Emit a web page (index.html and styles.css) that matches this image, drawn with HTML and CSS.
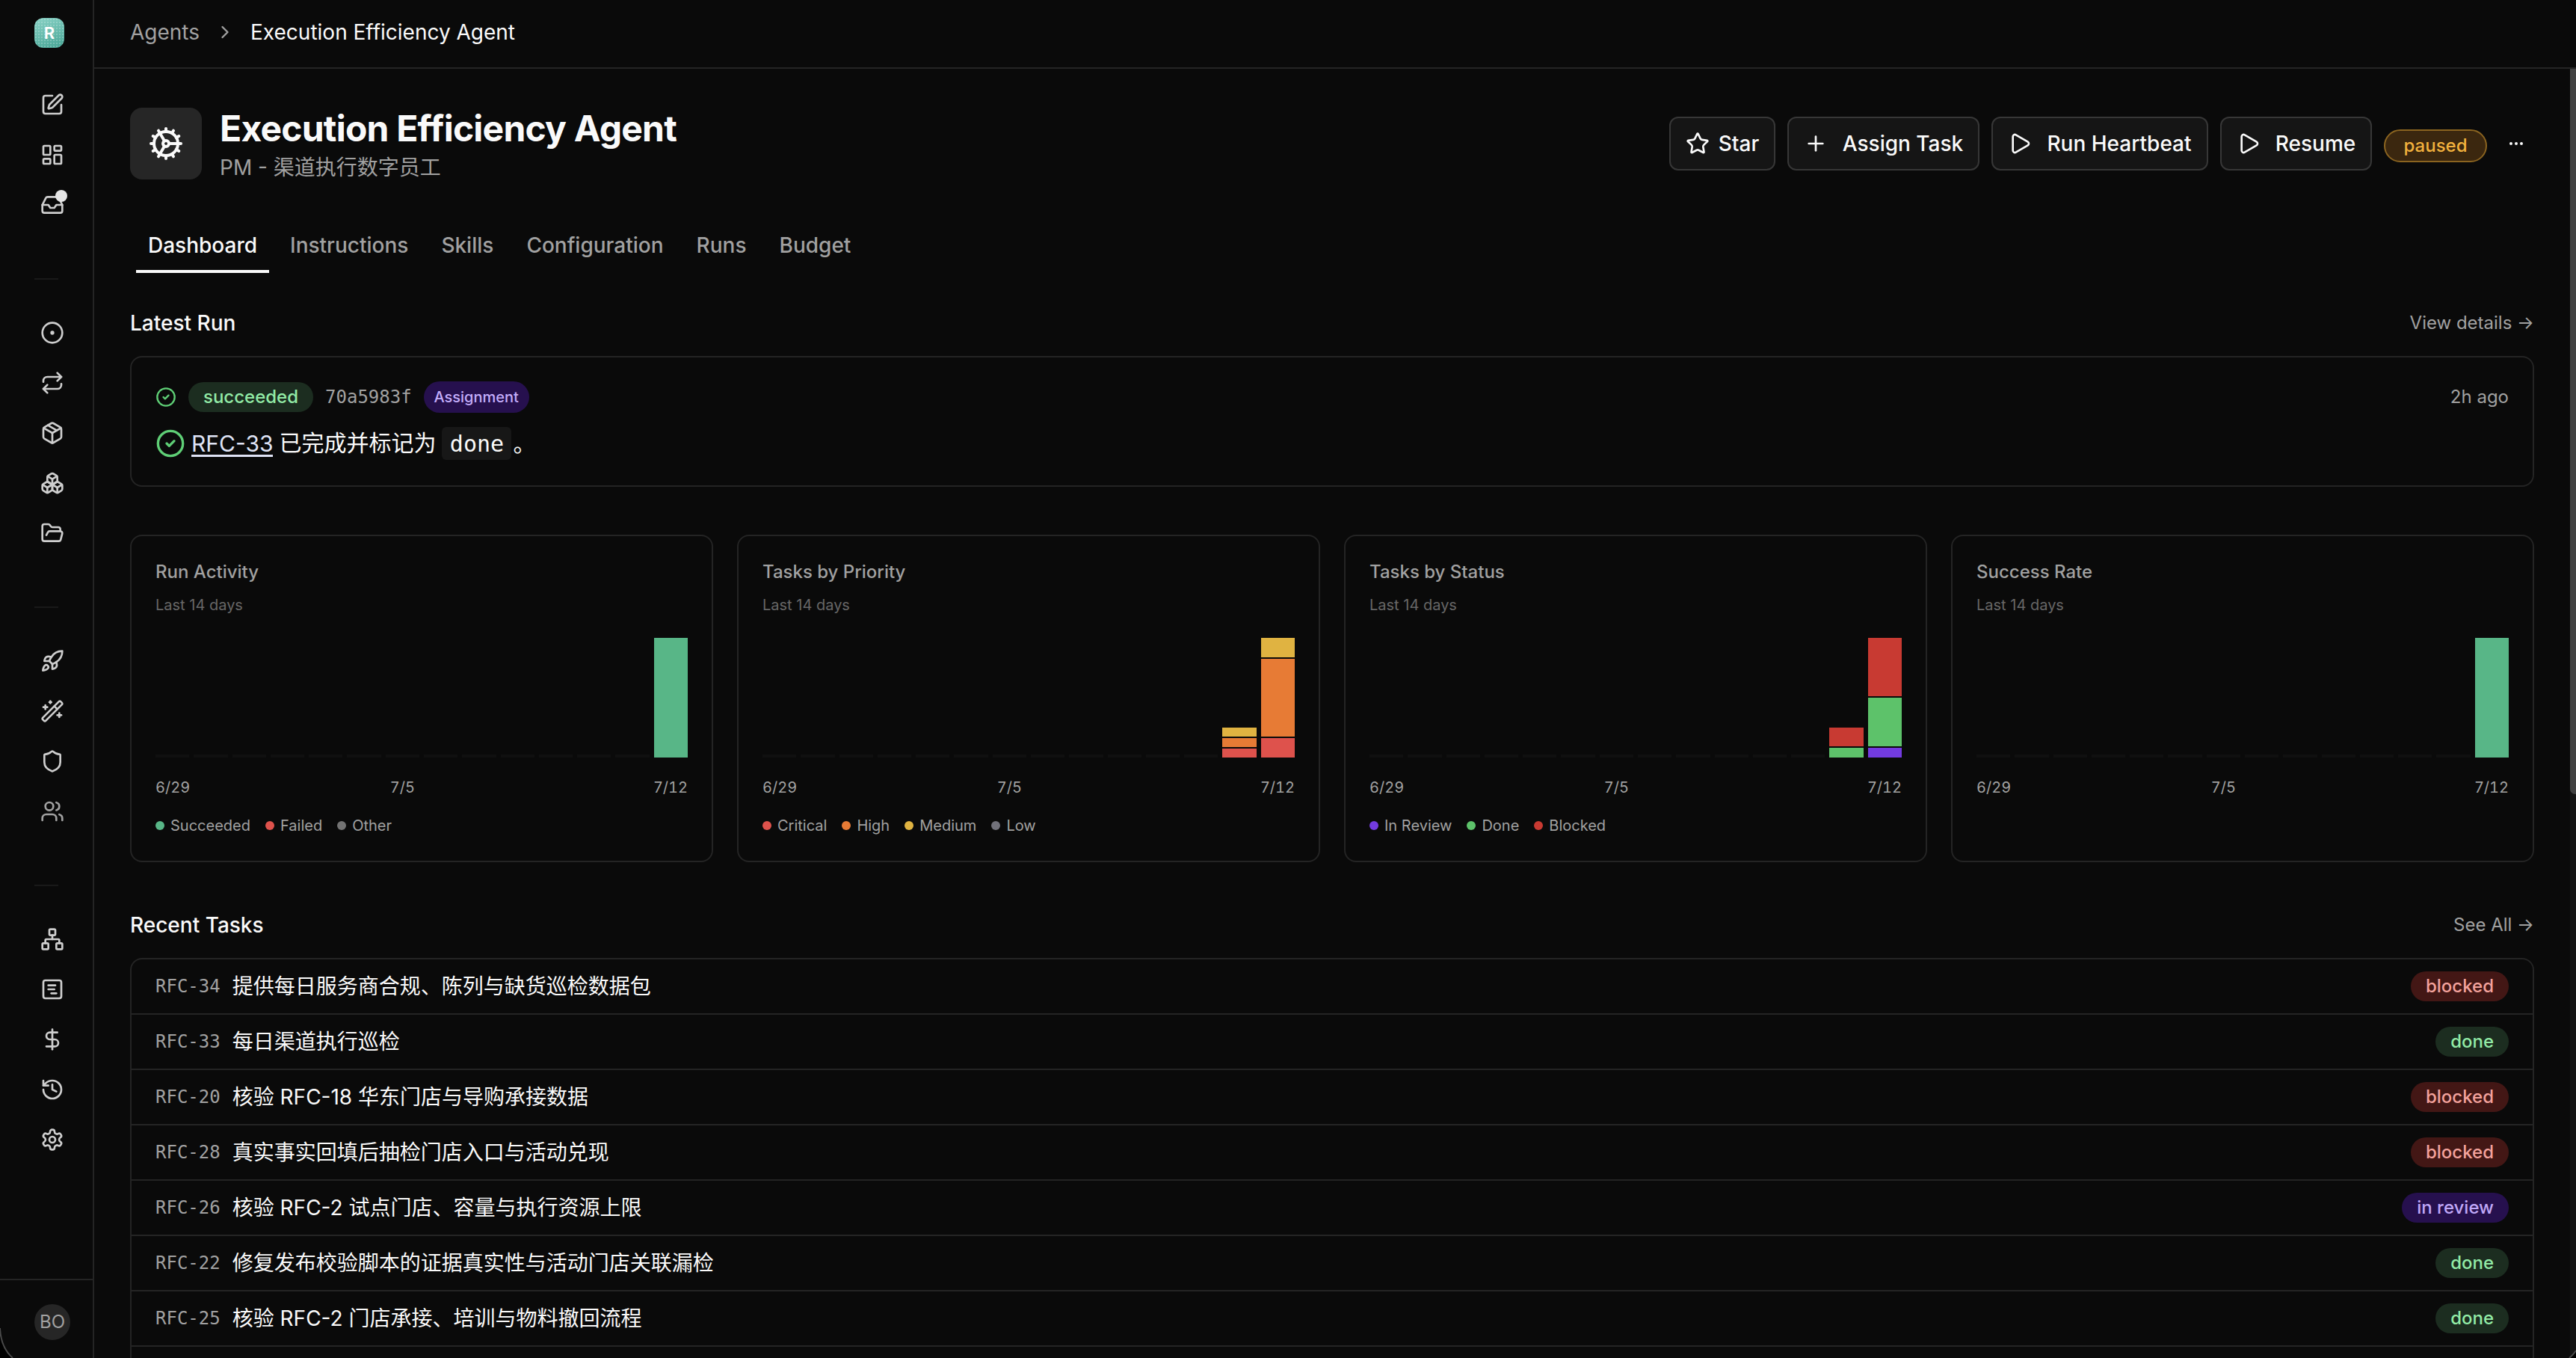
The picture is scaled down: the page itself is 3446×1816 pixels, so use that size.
FILE: index.html
```html
<!DOCTYPE html>
<html lang="zh-CN">
<head>
<meta charset="utf-8">
<title>Execution Efficiency Agent</title>
<link rel="stylesheet" href="styles.css">
</head>
<body>
<svg class="sprite" aria-hidden="true">
  <symbol id="edit" viewBox="0 0 24 24"><path d="M12 3H5a2 2 0 0 0-2 2v14a2 2 0 0 0 2 2h14a2 2 0 0 0 2-2v-7"/><path d="M18.375 2.625a1 1 0 0 1 3 3l-9.013 9.014a2 2 0 0 1-.853.505l-2.873.84a.5.5 0 0 1-.62-.62l.84-2.873a2 2 0 0 1 .506-.852z"/></symbol>
  <symbol id="grid" viewBox="0 0 24 24"><rect width="7" height="9" x="3" y="3" rx="1"/><rect width="7" height="5" x="14" y="3" rx="1"/><rect width="7" height="9" x="14" y="12" rx="1"/><rect width="7" height="5" x="3" y="16" rx="1"/></symbol>
  <symbol id="inbox" viewBox="0 0 24 24"><polyline points="22 12 16 12 14 15 10 15 8 12 2 12"/><path d="M5.45 5.11 2 12v6a2 2 0 0 0 2 2h16a2 2 0 0 0 2-2v-6l-3.45-6.89A2 2 0 0 0 16.76 4H7.24a2 2 0 0 0-1.79 1.11z"/></symbol>
  <symbol id="circle-dot" viewBox="0 0 24 24"><circle cx="12" cy="12" r="10"/><circle cx="12" cy="12" r="1"/></symbol>
  <symbol id="repeat" viewBox="0 0 24 24"><path d="m17 2 4 4-4 4"/><path d="M3 11v-1a4 4 0 0 1 4-4h14"/><path d="m7 22-4-4 4-4"/><path d="M21 13v1a4 4 0 0 1-4 4H3"/></symbol>
  <symbol id="package" viewBox="0 0 24 24"><path d="M11 21.73a2 2 0 0 0 2 0l7-4A2 2 0 0 0 21 16V8a2 2 0 0 0-1-1.73l-7-4a2 2 0 0 0-2 0l-7 4A2 2 0 0 0 3 8v8a2 2 0 0 0 1 1.73z"/><path d="M12 22V12"/><polyline points="3.29 7 12 12 20.71 7"/><path d="m7.5 4.27 9 5.15"/></symbol>
  <symbol id="boxes" viewBox="0 0 24 24"><path d="M2.97 12.92A2 2 0 0 0 2 14.63v3.24a2 2 0 0 0 .97 1.71l3 1.8a2 2 0 0 0 2.06 0L12 19v-5.5l-5-3-4.03 2.42Z"/><path d="m7 16.5-4.74-2.85"/><path d="m7 16.5 5-3"/><path d="M7 16.5v5.17"/><path d="M12 13.5V19l3.97 2.38a2 2 0 0 0 2.06 0l3-1.8a2 2 0 0 0 .97-1.71v-3.24a2 2 0 0 0-.97-1.71L17 10.5l-5 3Z"/><path d="m17 16.5-5-3"/><path d="m17 16.5 4.74-2.85"/><path d="M17 16.5v5.17"/><path d="M7.97 4.42A2 2 0 0 0 7 6.13v4.37l5 3 5-3V6.13a2 2 0 0 0-.97-1.71l-3-1.8a2 2 0 0 0-2.06 0l-3 1.8Z"/><path d="M12 8 7.26 5.15"/><path d="m12 8 4.74-2.85"/><path d="M12 13.5V8"/></symbol>
  <symbol id="folder" viewBox="0 0 24 24"><path d="m6 14 1.5-2.9A2 2 0 0 1 9.24 10H20a2 2 0 0 1 1.94 2.5l-1.54 6a2 2 0 0 1-1.95 1.5H4a2 2 0 0 1-2-2V5a2 2 0 0 1 2-2h3.9a2 2 0 0 1 1.69.9l.81 1.2a2 2 0 0 0 1.67.9H18a2 2 0 0 1 2 2v2"/></symbol>
  <symbol id="rocket" viewBox="0 0 24 24"><path d="M4.5 16.5c-1.5 1.26-2 5-2 5s3.74-.5 5-2c.71-.84.7-2.13-.09-2.91a2.18 2.18 0 0 0-2.91-.09z"/><path d="m12 15-3-3a22 22 0 0 1 2-3.95A12.88 12.88 0 0 1 22 2c0 2.72-.78 7.5-6 11a22.35 22.35 0 0 1-4 2z"/><path d="M9 12H4s.55-3.03 2-4c1.62-1.08 5 0 5 0"/><path d="M12 15v5s3.03-.55 4-2c1.08-1.62 0-5 0-5"/></symbol>
  <symbol id="wand" viewBox="0 0 24 24"><path d="m21.64 3.64-1.28-1.28a1.21 1.21 0 0 0-1.72 0L2.36 18.64a1.21 1.21 0 0 0 0 1.72l1.28 1.28a1.2 1.2 0 0 0 1.72 0L21.64 5.36a1.2 1.2 0 0 0 0-1.72"/><path d="m14 7 3 3"/><path d="M5 6v4"/><path d="M19 14v4"/><path d="M10 2v2"/><path d="M7 8H3"/><path d="M21 16h-4"/><path d="M11 3H9"/></symbol>
  <symbol id="shield" viewBox="0 0 24 24"><path d="M20 13c0 5-3.5 7.5-7.66 8.95a1 1 0 0 1-.67-.01C7.5 20.5 4 18 4 13V6a1 1 0 0 1 1-1c2 0 4.5-1.2 6.24-2.72a1.17 1.17 0 0 1 1.52 0C14.51 3.81 17 5 19 5a1 1 0 0 1 1 1z"/></symbol>
  <symbol id="users" viewBox="0 0 24 24"><path d="M16 21v-2a4 4 0 0 0-4-4H6a4 4 0 0 0-4 4v2"/><circle cx="9" cy="7" r="4"/><path d="M22 21v-2a4 4 0 0 0-3-3.87"/><path d="M16 3.13a4 4 0 0 1 0 7.75"/></symbol>
  <symbol id="network" viewBox="0 0 24 24"><rect x="16" y="16" width="6" height="6" rx="1"/><rect x="2" y="16" width="6" height="6" rx="1"/><rect x="9" y="2" width="6" height="6" rx="1"/><path d="M5 16v-3a1 1 0 0 1 1-1h12a1 1 0 0 1 1 1v3"/><path d="M12 12V8"/></symbol>
  <symbol id="notes" viewBox="0 0 24 24"><rect width="18" height="18" x="3" y="3" rx="2"/><path d="M8 8h7"/><path d="M8 12h6"/><path d="M11 16h5"/></symbol>
  <symbol id="dollar" viewBox="0 0 24 24"><path d="M12 2v20"/><path d="M17 5H9.5a3.5 3.5 0 0 0 0 7h5a3.5 3.5 0 0 1 0 7H6"/></symbol>
  <symbol id="history" viewBox="0 0 24 24"><path d="M3 12a9 9 0 1 0 9-9 9.75 9.75 0 0 0-6.74 2.74L3 8"/><path d="M3 3v5h5"/><path d="M12 7v5l4 2"/></symbol>
  <symbol id="settings" viewBox="0 0 24 24"><path d="M12.22 2h-.44a2 2 0 0 0-2 2v.18a2 2 0 0 1-1 1.73l-.43.25a2 2 0 0 1-2 0l-.15-.08a2 2 0 0 0-2.73.73l-.22.38a2 2 0 0 0 .73 2.73l.15.1a2 2 0 0 1 1 1.72v.51a2 2 0 0 1-1 1.74l-.15.09a2 2 0 0 0-.73 2.73l.22.38a2 2 0 0 0 2.73.73l.15-.08a2 2 0 0 1 2 0l.43.25a2 2 0 0 1 1 1.73V20a2 2 0 0 0 2 2h.44a2 2 0 0 0 2-2v-.18a2 2 0 0 1 1-1.73l.43-.25a2 2 0 0 1 2 0l.15.08a2 2 0 0 0 2.73-.73l.22-.39a2 2 0 0 0-.73-2.73l-.15-.08a2 2 0 0 1-1-1.74v-.5a2 2 0 0 1 1-1.74l.15-.09a2 2 0 0 0 .73-2.73l-.22-.38a2 2 0 0 0-2.73-.73l-.15.08a2 2 0 0 1-2 0l-.43-.25a2 2 0 0 1-1-1.73V4a2 2 0 0 0-2-2z"/><circle cx="12" cy="12" r="3"/></symbol>
  <symbol id="cog" viewBox="0 0 24 24"><path d="M12 20a8 8 0 1 0 0-16 8 8 0 0 0 0 16Z"/><path d="M12 14a2 2 0 1 0 0-4 2 2 0 0 0 0 4Z"/><path d="M12 2v2"/><path d="M12 22v-2"/><path d="m17 20.66-1-1.73"/><path d="M11 10.27 7 3.34"/><path d="m20.66 17-1.73-1"/><path d="m3.34 7 1.73 1"/><path d="M14 12h8"/><path d="M2 12h2"/><path d="m20.66 7-1.73 1"/><path d="m3.34 17 1.73-1"/><path d="m17 3.34-1 1.73"/><path d="m11 13.73-4 6.93"/></symbol>
  <symbol id="star" viewBox="0 0 24 24"><path d="M11.525 2.295a.53.53 0 0 1 .95 0l2.31 4.679a2.123 2.123 0 0 0 1.595 1.16l5.166.756a.53.53 0 0 1 .294.904l-3.736 3.638a2.123 2.123 0 0 0-.611 1.878l.882 5.14a.53.53 0 0 1-.771.56l-4.618-2.428a2.122 2.122 0 0 0-1.973 0L6.396 21.01a.53.53 0 0 1-.77-.56l.881-5.139a2.122 2.122 0 0 0-.611-1.879L2.16 9.795a.53.53 0 0 1 .294-.906l5.165-.755a2.122 2.122 0 0 0 1.597-1.16z"/></symbol>
  <symbol id="plus" viewBox="0 0 24 24"><path d="M5 12h14"/><path d="M12 5v14"/></symbol>
  <symbol id="play" viewBox="0 0 24 24"><path d="M5 5a2 2 0 0 1 3.008-1.728l11.997 6.998a2 2 0 0 1 .003 3.458l-12 7A2 2 0 0 1 5 19z"/></symbol>
  <symbol id="more" viewBox="0 0 24 24"><circle cx="12" cy="12" r="1"/><circle cx="19" cy="12" r="1"/><circle cx="5" cy="12" r="1"/></symbol>
  <symbol id="chevron" viewBox="0 0 24 24"><path d="m9 18 6-6-6-6"/></symbol>
  <symbol id="check" viewBox="0 0 24 24"><circle cx="12" cy="12" r="10"/><path d="m9 12 2 2 4-4"/></symbol>
</svg>

<div class="app">
  <aside class="sidebar">
    <div class="logo">R</div>
    <nav class="nav">
      <svg class="icon"><use href="#edit"/></svg>
      <svg class="icon"><use href="#grid"/></svg>
      <span class="inbox"><svg class="icon"><use href="#inbox"/></svg><i class="unread"></i></span>
    </nav>
    <nav class="nav divided">
      <svg class="icon"><use href="#circle-dot"/></svg>
      <svg class="icon"><use href="#repeat"/></svg>
      <svg class="icon"><use href="#package"/></svg>
      <svg class="icon"><use href="#boxes"/></svg>
      <svg class="icon"><use href="#folder"/></svg>
    </nav>
    <nav class="nav divided">
      <svg class="icon"><use href="#rocket"/></svg>
      <svg class="icon"><use href="#wand"/></svg>
      <svg class="icon"><use href="#shield"/></svg>
      <svg class="icon dim"><use href="#users"/></svg>
    </nav>
    <nav class="nav divided">
      <svg class="icon"><use href="#network"/></svg>
      <svg class="icon"><use href="#notes"/></svg>
      <svg class="icon"><use href="#dollar"/></svg>
      <svg class="icon"><use href="#history"/></svg>
      <svg class="icon"><use href="#settings"/></svg>
    </nav>
    <div class="account"><span class="avatar">BO</span></div>
  </aside>

  <div class="page">
    <header class="topbar">
      <span class="crumb">Agents</span>
      <svg class="icon crumb-sep"><use href="#chevron"/></svg>
      <span>Execution Efficiency Agent</span>
    </header>

    <main class="main">
      <section class="head">
        <div class="tile"><svg class="icon"><use href="#cog"/></svg></div>
        <div class="names">
          <h1>Execution Efficiency Agent</h1>
          <p>PM - 渠道执行数字员工</p>
        </div>
        <div class="actions">
          <button class="btn btn-star"><svg class="icon"><use href="#star"/></svg>Star</button>
          <button class="btn btn-assign"><svg class="icon plus"><use href="#plus"/></svg>Assign Task</button>
          <button class="btn btn-run"><svg class="icon"><use href="#play"/></svg>Run Heartbeat</button>
          <button class="btn btn-resume"><svg class="icon"><use href="#play"/></svg>Resume</button>
          <span class="paused">paused</span>
          <svg class="icon more"><use href="#more"/></svg>
        </div>
      </section>

      <nav class="tabs">
        <span class="tab active">Dashboard</span>
        <span class="tab">Instructions</span>
        <span class="tab">Skills</span>
        <span class="tab">Configuration</span>
        <span class="tab">Runs</span>
        <span class="tab">Budget</span>
      </nav>

      <div class="section-head first"><h2>Latest Run</h2><a>View details →</a></div>
      <section class="run">
        <div class="run-meta">
          <svg class="icon ok"><use href="#check"/></svg>
          <span class="pill done">succeeded</span>
          <code class="hash">70a5983f</code>
          <span class="source">Assignment</span>
          <time>2h ago</time>
        </div>
        <div class="run-text">
          <svg class="icon ok big"><use href="#check"/></svg>
          <a>RFC-33</a><span class="msg">已完成并标记为</span><code>done</code><span>。</span>
        </div>
      </section>

      <section class="charts">
        <article class="card">
          <h3>Run Activity</h3><p>Last 14 days</p>
          <div class="bars">
            <i></i><i></i><i></i><i></i><i></i><i></i><i></i><i></i><i></i><i></i><i></i><i></i><i></i>
            <div class="bar"><b class="emerald" style="height:160px"></b></div>
          </div>
          <div class="axis"><span>6/29</span><span>7/5</span><span>7/12</span></div>
          <div class="legend"><span class="k emerald">Succeeded</span><span class="k red">Failed</span><span class="k gray">Other</span></div>
        </article>
        <article class="card">
          <h3>Tasks by Priority</h3><p>Last 14 days</p>
          <div class="bars">
            <i></i><i></i><i></i><i></i><i></i><i></i><i></i><i></i><i></i><i></i><i></i><i></i>
            <div class="bar"><b class="yellow" style="height:12px"></b><b class="orange" style="height:12px"></b><b class="red" style="height:12px"></b></div>
            <div class="bar"><b class="yellow" style="height:26px"></b><b class="orange" style="height:104px"></b><b class="red" style="height:26px"></b></div>
          </div>
          <div class="axis"><span>6/29</span><span>7/5</span><span>7/12</span></div>
          <div class="legend"><span class="k red">Critical</span><span class="k orange">High</span><span class="k yellow">Medium</span><span class="k slate">Low</span></div>
        </article>
        <article class="card">
          <h3>Tasks by Status</h3><p>Last 14 days</p>
          <div class="bars">
            <i></i><i></i><i></i><i></i><i></i><i></i><i></i><i></i><i></i><i></i><i></i><i></i>
            <div class="bar"><b class="crimson" style="height:25px"></b><b class="green" style="height:13px"></b></div>
            <div class="bar"><b class="crimson" style="height:78px"></b><b class="green" style="height:65px"></b><b class="violet" style="height:13px"></b></div>
          </div>
          <div class="axis"><span>6/29</span><span>7/5</span><span>7/12</span></div>
          <div class="legend"><span class="k violet">In Review</span><span class="k green">Done</span><span class="k crimson">Blocked</span></div>
        </article>
        <article class="card">
          <h3>Success Rate</h3><p>Last 14 days</p>
          <div class="bars">
            <i></i><i></i><i></i><i></i><i></i><i></i><i></i><i></i><i></i><i></i><i></i><i></i><i></i>
            <div class="bar"><b class="emerald" style="height:160px"></b></div>
          </div>
          <div class="axis"><span>6/29</span><span>7/5</span><span>7/12</span></div>
        </article>
      </section>

      <div class="section-head"><h2>Recent Tasks</h2><a>See All →</a></div>
      <section class="tasks">
        <div class="task"><code>RFC-34</code><span class="title">提供每日服务商合规、陈列与缺货巡检数据包</span><span class="pill blocked">blocked</span></div>
        <div class="task"><code>RFC-33</code><span class="title">每日渠道执行巡检</span><span class="pill done">done</span></div>
        <div class="task"><code>RFC-20</code><span class="title">核验 RFC-18 华东门店与导购承接数据</span><span class="pill blocked">blocked</span></div>
        <div class="task"><code>RFC-28</code><span class="title">真实事实回填后抽检门店入口与活动兑现</span><span class="pill blocked">blocked</span></div>
        <div class="task"><code>RFC-26</code><span class="title">核验 RFC-2 试点门店、容量与执行资源上限</span><span class="pill review">in review</span></div>
        <div class="task"><code>RFC-22</code><span class="title">修复发布校验脚本的证据真实性与活动门店关联漏检</span><span class="pill done">done</span></div>
        <div class="task"><code>RFC-25</code><span class="title">核验 RFC-2 门店承接、培训与物料撤回流程</span><span class="pill done">done</span></div>
        <div class="task"></div>
      </section>
    </main>
  </div>
</div>
<div class="scrollbar"><div class="thumb"></div></div>
<svg class="corner" viewBox="0 0 20 40"><path class="outside" d="M0 0Q1 26 17 40H0Z"/><path class="edge" d="M0 0Q1 26 17 40"/></svg>
<svg class="corner right" viewBox="0 0 20 40"><path class="outside" d="M20 29L11 40H20Z"/><path class="edge" d="M20 30Q16 36 11 40"/></svg>
</body>
</html>
```
FILE: styles.css
```css
* { box-sizing: border-box; }
html, body { margin: 0; height: 100%; overflow: hidden; background: #0a0a0a; }
body {
  color: #fafafa;
  font: 400 28px/40px Inter, "Noto Sans CJK SC", sans-serif;
}
h1, h2, h3, p { margin: 0; }
code { font-family: "DejaVu Sans Mono", "Noto Sans CJK SC", monospace; }
.sprite { display: none; }
.icon {
  display: block; flex: none; width: 32px; height: 32px;
  fill: none; stroke: currentColor; stroke-width: 2;
  stroke-linecap: round; stroke-linejoin: round;
}
.app { display: flex; height: 1816px; }

/* sidebar */
.sidebar {
  display: flex; flex-direction: column; flex: none;
  width: 126px; border-right: 2px solid #242424; color: #cecece;
}
.logo {
  width: 40px; height: 40px; margin: 24px 0 60px 46px; border-radius: 12px;
  background:
    radial-gradient(circle, #ffffff38 1px, transparent 1.3px) 0 0 / 4px 4px,
    linear-gradient(160deg, #8ad2c6, #45a494);
  color: #fff; font-size: 22px; line-height: 40px; font-weight: 600; text-align: center;
}
.nav { display: flex; flex-direction: column; gap: 35px; padding-left: 54px; }
.divided { padding-top: 57px; margin-top: 82px; position: relative; }
.divided::before {
  content: ""; position: absolute; left: 46px; top: 0;
  width: 32px; height: 2px; background: #191919;
}
.dim { color: #a1a1a1; }
.inbox { position: relative; }
.unread {
  position: absolute; right: 34px; top: -4px;
  width: 16px; height: 16px; border-radius: 50%; background: #e5e5e5;
}
.account {
  margin-top: auto; height: 106px; padding: 32px 0 0 46px; border-top: 2px solid #242424;
}
.avatar {
  display: block; width: 48px; height: 48px; border-radius: 50%;
  background: #262626; color: #a1a1a1; font-size: 24px; line-height: 48px; text-align: center;
}

/* header */
.page { flex: 1; min-width: 0; }
.topbar {
  display: flex; align-items: center; height: 92px; padding: 0 48px 4px;
  border-bottom: 2px solid #242424;
}
.crumb { color: #a1a1a1; }
.crumb-sep { width: 28px; height: 28px; margin: 0 20px; color: #a1a1a1; }
.main { display: flex; flex-direction: column; padding: 52px 56px 0 48px; }
.head { display: flex; height: 96px; }
.tile {
  display: grid; place-items: center; width: 96px; height: 96px;
  border-radius: 16px; background: #262626;
}
.tile .icon { width: 48px; height: 48px; }
.names { margin-left: 24px; }
h1 { font-size: 48px; line-height: 56px; font-weight: 700; letter-spacing: -0.78px; white-space: nowrap; }
.names p { color: #a1a1a1; line-height: 48px; }
.actions { display: flex; align-items: center; gap: 16px; margin-left: auto; }
.btn {
  display: flex; align-items: center; justify-content: center; height: 72px; padding: 0;
  border: 2px solid #373737; border-radius: 12px; background: #151515;
  color: #fafafa; font: 500 28px/40px Inter, sans-serif; white-space: nowrap;
}
.btn-star { width: 142px; gap: 12px; }
.btn-assign { width: 257px; gap: 20px; }
.btn-run { width: 290px; gap: 20px; }
.btn-resume { width: 203px; gap: 20px; }
.paused {
  width: 138px; height: 44px; margin-top: 5px; border: 2px solid #8b6420; border-radius: 22px;
  background: #3b270f; color: #f2b13d; font-size: 24px; line-height: 40px; font-weight: 500; text-align: center;
}
.more { width: 24px; height: 24px; margin: 0 12px 0 11px; }

/* tabs */
.tabs { display: flex; margin: 56px 0 0 8px; }
.tab { height: 69px; padding: 12px 16px 0; margin-right: 12px; color: #a1a1a1; font-weight: 500; }
.tab.active { color: #fafafa; border-bottom: 4px solid #fafafa; }

.section-head { display: flex; justify-content: space-between; align-items: center; height: 40px; margin: 64px 0 24px; }
.section-head.first { margin: 47px 0 24px; }
h2 { font-size: 28px; font-weight: 500; }
.section-head a { color: #a1a1a1; font-size: 24px; }

/* latest run */
.run { height: 175px; border: 2px solid #242424; border-radius: 16px; padding: 32px; }
.run-meta { display: flex; align-items: center; height: 42px; font-size: 24px; }
.ok { color: #5fcf76; }
.run-meta .ok { width: 28px; height: 28px; margin-right: 16px; }
.pill { display: block; padding: 0 20px; height: 40px; border-radius: 20px; font-size: 24px; line-height: 40px; font-weight: 500; }
.pill.done { background: #1c2d20; color: #92eba6; }
.pill.blocked { background: #431715; color: #f3a29c; }
.pill.review { background: #26104e; color: #c0a8f8; }
.hash { margin: 0 16px; color: #a1a1a1; }
.source { width: 141px; height: 42px; border-radius: 21px; background: #26104e; color: #c4adfb; font-size: 20px; line-height: 42px; font-weight: 500; text-align: center; }
.run-meta time { margin-left: auto; color: #a1a1a1; }
.run-text { display: flex; align-items: center; height: 44px; margin-top: 19px; font-size: 30px; }
.big { width: 40px; height: 40px; margin-right: 8px; }
.run-text a { height: 38px; margin-bottom: 2px; line-height: 40px; border-bottom: 3px solid #dfe3f5; color: #dfe3f5; }
.msg { margin: 0 0 2px 8px; }
.run-text code { width: 93px; height: 44px; margin: 0 2px 0 8px; border-radius: 6px; background: #171717; line-height: 45px; text-align: center; }

/* charts */
.charts { display: grid; grid-template-columns: repeat(4, 1fr); gap: 32px; margin-top: 64px; }
.card { height: 438px; padding: 32px 32px 0; border: 2px solid #242424; border-radius: 16px; color: #a1a1a1; }
h3 { font-size: 24px; line-height: 32px; font-weight: 500; }
.card p { margin-top: 12px; color: #676767; font-size: 20px; line-height: 32px; }
.bars { display: grid; grid-template-columns: repeat(14, 1fr); gap: 6px; align-items: end; height: 160px; margin-top: 28px; }
.bars i { height: 4px; background: #101010; }
.bar { display: flex; flex-direction: column; gap: 2px; }
.axis { display: grid; grid-template-columns: repeat(14, 1fr); gap: 6px; height: 32px; margin-top: 24px; font-size: 20px; line-height: 32px; font-variant-numeric: tabular-nums; text-align: center; }
.axis span { white-space: nowrap; }
.axis span:nth-child(2) { grid-column: 7; }
.axis span:nth-child(3) { grid-column: 14; }
.legend { display: flex; gap: 20px; margin-top: 19px; font-size: 20px; line-height: 32px; }
.k { display: flex; align-items: center; gap: 8px; }
.k::before { content: ""; width: 12px; height: 12px; border-radius: 50%; background: var(--c); }
.bar b { background: var(--c); }
.emerald { --c: #58b687; }
.red { --c: #de524c; }
.orange { --c: #e77b35; }
.yellow { --c: #e0b341; }
.gray { --c: #737373; }
.slate { --c: #71717a; }
.crimson { --c: #c83a32; }
.green { --c: #5dc26a; }
.violet { --c: #733be0; }

/* tasks */
.tasks { border: 2px solid #242424; border-radius: 16px; }
.task { display: flex; align-items: center; height: 74px; padding: 0 32px; border-bottom: 2px solid #242424; }
.task code { color: #a1a1a1; font-size: 24px; }
.title { margin-left: 16px; }
.task .pill { margin-left: auto; }

/* window overlay */
.scrollbar { position: absolute; right: 0; top: 92px; bottom: 0; width: 8px; background: #151515; }
.thumb { height: 970px; border-radius: 0 0 0 7px; background: #424242; }
.corner { position: absolute; left: 0; bottom: 0; width: 20px; height: 40px; }
.corner.right { left: auto; right: 0; }
.outside { fill: #000; }
.edge { fill: none; stroke: #4a4a4a; stroke-width: 2; }
```
